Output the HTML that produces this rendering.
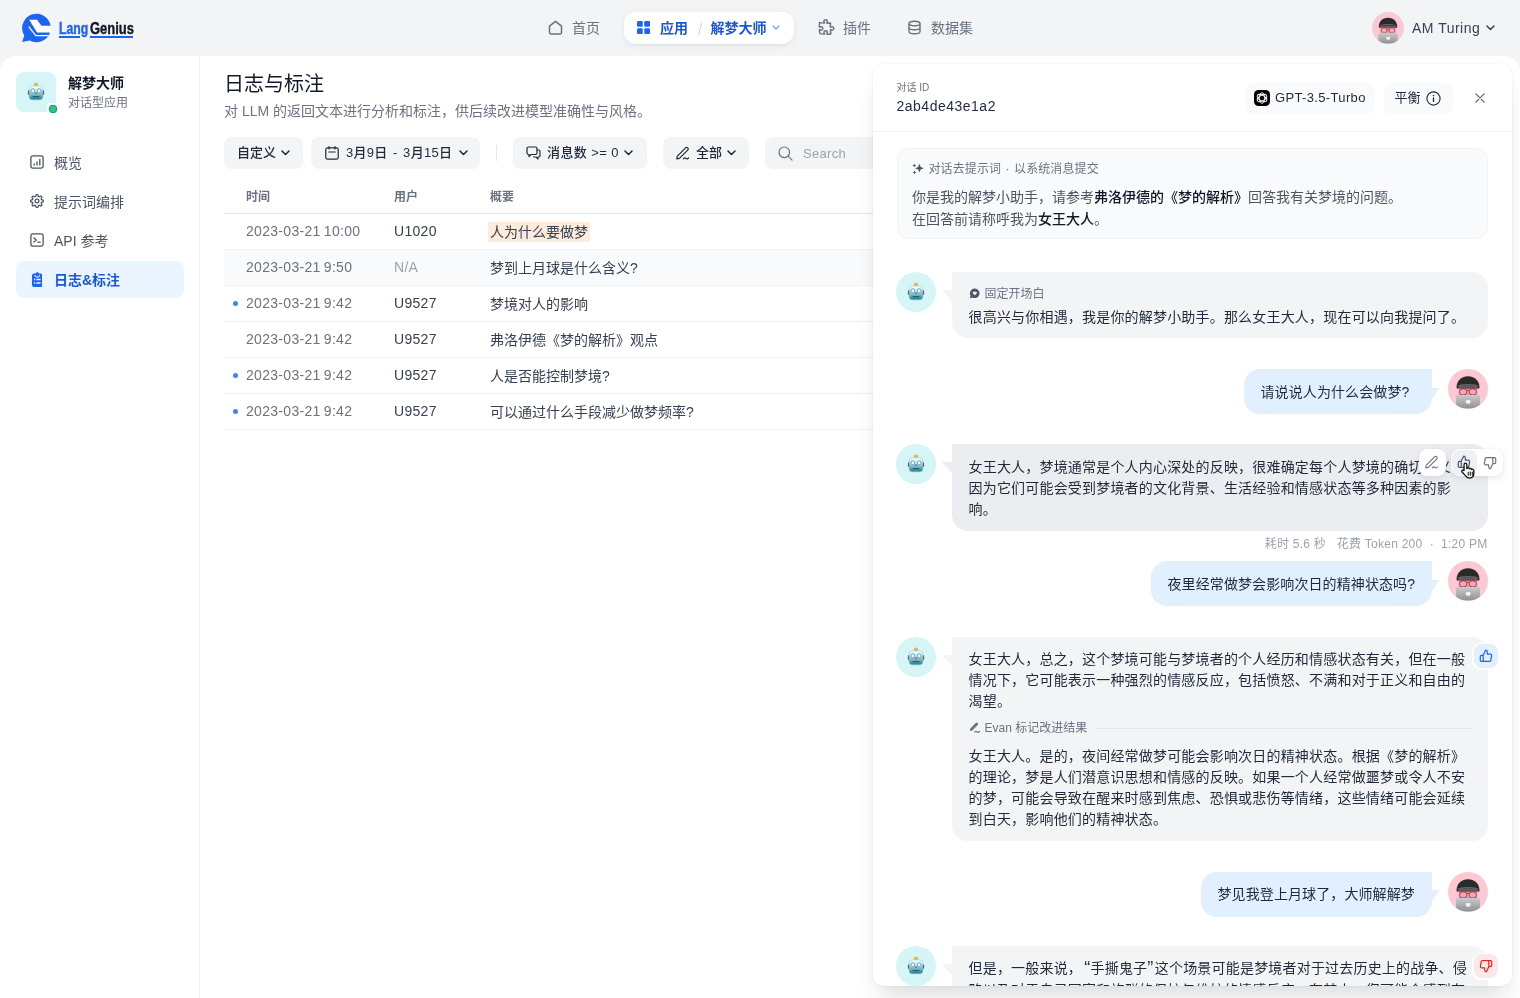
<!DOCTYPE html>
<html lang="zh-CN">
<head>
<meta charset="utf-8">
<title>LangGenius - 日志与标注</title>
<style>
*{box-sizing:border-box;margin:0;padding:0}
html,body{width:1520px;height:998px;overflow:hidden}
body{background:#F3F4F6;font-family:"Liberation Sans","Noto Sans CJK SC",sans-serif;color:#1F2937;position:relative;-webkit-font-smoothing:antialiased}
.abs{position:absolute}
svg{display:block}
/* header */
#hdr{will-change:transform;position:absolute;left:0;top:0;width:1520px;height:56px}
#logo{position:absolute;left:21px;top:13px}
#logotxt{position:absolute;left:58.500px;top:18.500px;font-size:16px;font-weight:700;line-height:20px}
#logotxt span{-webkit-text-stroke:0.4px currentColor;position:absolute;top:0;transform-origin:0 0;display:block}
.nav{position:absolute;top:12px;height:32px;line-height:20px;display:flex;align-items:center;font-size:14px;color:#6B7280;white-space:nowrap}
.nav svg{margin-right:8px;position:relative;top:-0.700px}
.nav span{position:relative;top:-0.300px}
#pill{background:#fff;border-radius:12px;box-shadow:0 2px 6px rgba(16,24,40,.06),0 1px 2px rgba(16,24,40,.04);color:#1A56DB;font-weight:700}
/* main */
#main{will-change:transform;position:absolute;left:0;top:56px;width:1520px;height:942px;background:#fff;border-radius:16px 16px 0 0;overflow:hidden}
#side{position:absolute;left:0;top:0;width:200px;height:942px;border-right:1px solid #F0F1F3}
.sitem{position:absolute;left:16px;width:168px;height:36px;line-height:20px;border-radius:8px;font-size:14px;color:#4B5563;display:flex;align-items:center;padding-left:14px;white-space:nowrap}
.sitem svg{margin-right:10px}
.sitem span{position:relative;top:0.500px}
.sitem.on{background:#EBF5FF;color:#1A56DB;font-weight:700}
/* filters */
.fbtn{position:absolute;top:81px;height:32px;line-height:18px;font-weight:500;background:#F3F4F6;border-radius:8px;font-size:13px;color:#1F2937;display:flex;align-items:center;white-space:nowrap}
/* table */
.th{position:absolute;top:133px;font-size:12px;font-weight:700;color:#6B7280;line-height:16px}
.row{position:absolute;left:224px;width:660px;height:36px;border-bottom:1px solid #F0F1F3;font-size:14px;color:#374151;line-height:35px;white-space:nowrap}
.row span{position:absolute;top:0}
.c1{left:22px;color:#6B7280;letter-spacing:.3px;word-spacing:-1px}.c2{left:170px;letter-spacing:.3px}.c3{left:266px;top:1px !important}
.hl{font-style:normal;background:#FDEBDC;position:relative;top:0;padding:2px 2px;margin-left:-2px;border-radius:2px}
.dot{position:absolute;left:9px;top:15px;width:5px;height:5px;border-radius:50%;background:#3F83F8}
/* drawer */
#drw{will-change:transform;position:absolute;left:873px;top:64px;width:638.5px;height:922px;background:#fff;border-radius:10px;box-shadow:0 20px 26px -8px rgba(16,24,40,.125),0 3px 14px rgba(16,24,40,.04),0 0 0 .5px rgba(16,24,40,.05);overflow:hidden}
#drwh{position:absolute;left:0;top:0;width:100%;height:68px;border-bottom:1px solid #F0F1F3}
.bub{position:absolute;background:#F3F4F6;border-radius:16px;font-size:14px;line-height:21px;color:#1F2937}
.ubub{position:absolute;background:#E1EFFE;border-radius:16px;border-top-right-radius:0;height:45px}
.hbtn{position:absolute;top:19px;height:30.500px;line-height:18px;background:#F9FAFB;border-radius:8px;font-size:13px;color:#1F2937;display:flex;align-items:center;white-space:nowrap}
.ct{position:absolute;font-size:14px;line-height:21px;color:#1F2937;white-space:nowrap;letter-spacing:.19px}
.tb{position:absolute;height:27px;border-radius:8px;background:#fff;box-shadow:0 2px 6px rgba(16,24,40,.10),0 0 1px rgba(16,24,40,.10)}
#pr b{font-weight:500;color:#111827}
.q{display:inline-block;text-align:center}
.av{position:absolute;width:40px;height:40px;border-radius:50%}
.bot{background:#D5F5F6}
.usr{background:#FBC8D4}
</style>
</head>
<body>
<svg width="0" height="0" style="position:absolute"><defs>
<linearGradient id="lap" x1="0" y1="0" x2="0" y2="1"><stop offset="0" stop-color="#C9CBCE"/><stop offset="1" stop-color="#8E9093"/></linearGradient>
<linearGradient id="rb" x1="0" y1="0" x2="0" y2="1"><stop offset="0" stop-color="#F6FDFE"/><stop offset=".3" stop-color="#CDECF1"/><stop offset=".62" stop-color="#7ABBC9"/><stop offset="1" stop-color="#26758A"/></linearGradient>
<linearGradient id="re" x1="0" y1="0" x2="0" y2="1"><stop offset="0" stop-color="#C9544F"/><stop offset=".6" stop-color="#4A3A3A"/><stop offset="1" stop-color="#2E2C2C"/></linearGradient>
<g id="face">
  <path d="M8.600 19.600c-0.700-7.200 4.300-12.400 11.400-12.400s12.100 5.200 11.400 12.400z" fill="#2A2A2C"/>
  <path d="M9.200 17.300c1-1.500 5.200-2.300 10.800-2.300s9.800 0.800 10.800 2.300c-3.500-0.900-18.100-0.900-21.600 0z" fill="#4A6881"/>
  <rect x="10.700" y="17.600" width="18.600" height="9.500" fill="#E3A08A"/>
  <rect x="10.700" y="17.600" width="18.600" height="2.200" fill="#7A4E3F"/>
  <rect x="11.600" y="19.900" width="7.100" height="6" rx="2.600" fill="#F3A3C5" stroke="#8A3345" stroke-width="0.800"/>
  <rect x="21.300" y="19.900" width="7.100" height="6" rx="2.600" fill="#F3A3C5" stroke="#8A3345" stroke-width="0.800"/>
  <path d="M18.700 21.400h2.600" stroke="#8A3345" stroke-width="0.800"/>
  <path d="M8 27.200q0-1.200 1.200-1.200h21.600q1.200 0 1.200 1.200v8.300q-4 4-12 4t-12-4z" fill="url(#lap)"/>
  <path d="M20.700 31.200c0.900-0.500 1.900 0.100 1.900 1.200s-0.700 2.300-1.500 2.300c-0.400 0-0.500-0.200-0.900-0.200s-0.500 0.200-0.900 0.200c-0.800 0-1.500-1.200-1.500-2.300s1-1.700 1.900-1.200c0.300 0.100 0.700 0.100 1 0z" fill="#F4F4F4"/>
</g>
<g id="robot">
  <rect x="19.200" y="12" width="1.600" height="2.600" fill="#B98A2B"/>
  <ellipse cx="20" cy="12.200" rx="2.100" ry="1.800" fill="#F0B340"/>
  <rect x="11.900" y="17.900" width="2.200" height="4.800" rx="1" fill="url(#re)"/>
  <rect x="25.900" y="17.900" width="2.200" height="4.800" rx="1" fill="url(#re)"/>
  <rect x="13.100" y="13.900" width="13.800" height="13.900" rx="3.200" fill="url(#rb)" stroke="#86C9D6" stroke-width="0.500"/>
  <rect x="15.100" y="16.900" width="3.300" height="3.800" rx="1.200" fill="#F4FDFE" stroke="#3FA3B9" stroke-width="0.900"/>
  <rect x="21.600" y="16.900" width="3.300" height="3.800" rx="1.200" fill="#F4FDFE" stroke="#3FA3B9" stroke-width="0.900"/>
  <ellipse cx="20" cy="21.300" rx="1.300" ry="0.950" fill="#D7576A"/>
  <rect x="16.600" y="23.900" width="6.800" height="1.300" rx="0.400" fill="#1F6073"/>
</g>
<g id="tup"><path d="M4.200 6.300L6.600 1.200c0.900 0 1.700 0.700 1.700 1.700v2.200h3c0.800 0 1.400 0.700 1.300 1.500l-0.800 4.700c-0.100 0.700-0.700 1.100-1.300 1.100H4.200z M4.200 6.300H2.400c-0.600 0-1.100 0.500-1.100 1.100v3.900c0 0.600 0.500 1.100 1.100 1.100h1.800" fill="none" stroke-width="1.200" stroke-linejoin="round" stroke-linecap="round"/></g>
</defs></svg>
<div id="hdr">
  <svg id="logo" width="32" height="32" viewBox="0 0 32 32">
    <path d="M15.500 0.700a14.300 14.300 0 1 1-6.800 26.900l-7.600 1.400 2.200-6.600A14.300 14.300 0 0 1 15.500 0.700z" fill="#1C64F2"/>
    <path d="M8.200 6.700h7.900l4.300 6h9.700v6.800H16.100z" fill="#fff"/>
    <path d="M7.700 13.600l7.100 9.100h12.600" fill="none" stroke="#fff" stroke-width="1.200"/>
  </svg>
  <div id="logotxt"><span style="color:#1C64F2;left:0;transform:scaleX(.765)">Lang</span><span style="color:#111827;left:31.500px;transform:scaleX(.81)">Genius</span></div>
  <div class="abs" style="left:59px;top:36px;width:21px;height:2px;background:#1C64F2"></div>
  <div class="abs" style="left:90px;top:36px;width:43px;height:2px;background:#1C64F2"></div>

  <div class="nav" style="left:548px">
    <svg width="15" height="15" viewBox="0 0 15 15" fill="none" stroke="#6B7280" stroke-width="1.5" stroke-linejoin="round"><path d="M1.5 6.2L7.5 1.3l6 4.900v6.300a1.500 1.500 0 0 1-1.500 1.500h-9a1.500 1.500 0 0 1-1.500-1.500z"/></svg>
    <span style="margin-left:1px">首页</span>
  </div>
  <div class="nav" id="pill" style="left:624px;width:170px;padding-left:13px">
    <svg width="13" height="13" viewBox="0 0 13 13" fill="#1C64F2"><rect x="0" y="0" width="5.750" height="5.750" rx="1.200"/><rect x="7.250" y="0" width="5.750" height="5.750" rx="1.200"/><rect x="0" y="7.250" width="5.750" height="5.750" rx="1.200"/><rect x="7.250" y="7.250" width="5.750" height="5.750" rx="1.200"/></svg>
    <span style="margin-left:2px">应用</span>
    <span style="color:#D1D5DB;font-weight:400;margin:0 8.500px 0 9.500px;font-size:16px;top:1.500px;transform:scaleX(.85)">/</span>
    <span>解梦大师</span>
    <svg style="margin:0 0 0 6px" width="8" height="5" viewBox="0 0 8 5" fill="none" stroke="#76A1F5" stroke-width="1.200" stroke-linecap="round" stroke-linejoin="round"><path d="M1 1l3 3 3-3"/></svg>
  </div>
  <div class="nav" style="left:818px">
    <svg style="margin-left:-1px;margin-right:6.500px;position:relative;top:-0.500px;transform:scaleX(-1)" width="18.500" height="18.500" viewBox="0 0 24 24" fill="none" stroke="#6B7280" stroke-width="1.900" stroke-linejoin="round" stroke-linecap="round"><path d="M14.250 6.087c0-.355.186-.676.401-.959.221-.29.349-.634.349-1.003 0-1.036-1.007-1.875-2.250-1.875s-2.250.84-2.250 1.875c0 .369.128.713.349 1.003.215.283.401.604.401.959a.64.64 0 0 1-.657.643 48.390 48.390 0 0 1-4.163-.3c.186 1.613.293 3.250.315 4.907a.656.656 0 0 1-.658.663c-.355 0-.676-.186-.959-.401a1.647 1.647 0 0 0-1.003-.349c-1.036 0-1.875 1.007-1.875 2.250s.84 2.250 1.875 2.250c.369 0 .713-.128 1.003-.349.283-.215.604-.401.959-.401.310 0 .555.260.532.570a48.039 48.039 0 0 1-.642 5.056c1.518.190 3.058.309 4.616.354a.64.64 0 0 0 .657-.643c0-.355-.186-.676-.401-.959a1.647 1.647 0 0 1-.349-1.003c0-1.035 1.008-1.875 2.250-1.875 1.243 0 2.250.84 2.250 1.875 0 .369-.128.713-.349 1.003-.215.283-.4.604-.4.959 0 .333.277.599.610.580a48.100 48.100 0 0 0 5.427-.630 48.050 48.050 0 0 0 .582-4.717.532.532 0 0 0-.533-.570c-.355 0-.676.186-.959.401-.290.221-.634.349-1.003.349-1.035 0-1.875-1.007-1.875-2.250s.84-2.250 1.875-2.250c.370 0 .713.128 1.003.349.283.215.604.401.960.401a.656.656 0 0 0 .658-.663 48.422 48.422 0 0 0-.370-5.360c-1.886.342-3.810.574-5.766.689a.578.578 0 0 1-.610-.580z"/></svg>
    <span style="margin-left:1px">插件</span>
  </div>
  <div class="nav" style="left:907px">
    <svg width="15" height="15" viewBox="0 0 15 15" fill="none" stroke="#6B7280" stroke-width="1.400"><ellipse cx="7.500" cy="3.500" rx="5.500" ry="2.300"/><path d="M2 3.500v8c0 1.300 2.500 2.300 5.500 2.300s5.500-1 5.500-2.300v-8"/><path d="M2 7.500c0 1.300 2.500 2.300 5.500 2.300s5.500-1 5.500-2.300"/></svg>
    <span style="margin-left:1px">数据集</span>
  </div>

  <div class="abs" id="uav" style="left:1372px;top:12px;width:32px;height:32px;border-radius:50%;background:#FBC8D4;overflow:hidden">
    <svg width="32" height="32" viewBox="0 0 40 40"><use href="#face"/></svg>
  </div>
  <div class="abs" style="left:1412px;top:19px;font-size:14px;line-height:18px;color:#374151;white-space:nowrap;letter-spacing:0.5px">AM Turing</div>
  <svg class="abs" style="left:1486px;top:25px" width="9" height="6" viewBox="0 0 9 6" fill="none" stroke="#374151" stroke-width="1.500" stroke-linecap="round" stroke-linejoin="round"><path d="M1 1l3.500 3.500L8 1"/></svg>
</div>
<div id="main">
  <div id="side">
    <div class="abs" style="left:16px;top:16px;width:40px;height:40px;border-radius:8px;background:#D5F5F6"></div>
    <svg class="abs" style="left:16px;top:16px" width="40" height="40" viewBox="0 0 40 40"><use href="#robot"/></svg>
    <div class="abs" style="left:47px;top:47px;width:12px;height:12px;border-radius:4px;background:#fff"></div>
    <div class="abs" style="left:49px;top:49px;width:8px;height:8px;border-radius:3px;background:#31C48D;border:1px solid #0E9F6E"></div>
    <div class="abs" style="left:68px;top:17px;font-size:14px;line-height:20px;font-weight:700;color:#111827;white-space:nowrap">解梦大师</div>
    <div class="abs" style="left:68px;top:38px;font-size:12px;line-height:18px;color:#6B7280;white-space:nowrap">对话型应用</div>

    <div class="sitem" style="top:88px">
      <svg width="14" height="14" viewBox="0 0 14 14" fill="none" stroke="#4B5563" stroke-width="1.300" stroke-linecap="round"><rect x="0.900" y="0.900" width="12.200" height="12.200" rx="1.800"/><path d="M4.200 10v-1M7 10V7M9.800 10V4.500"/></svg>
      <span>概览</span></div>
    <div class="sitem" style="top:127px">
      <svg width="14" height="14" viewBox="0 0 24 24" fill="none" stroke="#4B5563" stroke-width="2.200" stroke-linecap="round" stroke-linejoin="round"><circle cx="12" cy="12" r="3.200"/><path d="M19.400 15a1.650 1.650 0 0 0 .33 1.820l.06.06a2 2 0 1 1-2.830 2.830l-.06-.06a1.650 1.650 0 0 0-1.820-.33 1.650 1.650 0 0 0-1 1.510V21a2 2 0 1 1-4 0v-.09A1.650 1.650 0 0 0 9 19.400a1.650 1.650 0 0 0-1.820.33l-.06.06a2 2 0 1 1-2.830-2.830l.06-.06a1.650 1.650 0 0 0 .33-1.820 1.650 1.650 0 0 0-1.510-1H3a2 2 0 1 1 0-4h.09A1.650 1.650 0 0 0 4.600 9a1.650 1.650 0 0 0-.33-1.820l-.06-.06a2 2 0 1 1 2.830-2.830l.06.06a1.650 1.650 0 0 0 1.820.33H9a1.650 1.650 0 0 0 1-1.510V3a2 2 0 1 1 4 0v.09a1.650 1.650 0 0 0 1 1.510 1.650 1.650 0 0 0 1.820-.33l.06-.06a2 2 0 1 1 2.830 2.830l-.06.06a1.650 1.650 0 0 0-.33 1.820V9a1.650 1.650 0 0 0 1.510 1H21a2 2 0 1 1 0 4h-.09a1.650 1.650 0 0 0-1.510 1z"/></svg>
      <span>提示词编排</span></div>
    <div class="sitem" style="top:166px">
      <svg width="14" height="14" viewBox="0 0 14 14" fill="none" stroke="#4B5563" stroke-width="1.300" stroke-linecap="round" stroke-linejoin="round"><rect x="0.900" y="0.900" width="12.200" height="12.200" rx="1.800"/><path d="M4 5l2.200 2L4 9M7.800 9.200h2.400"/></svg>
      <span>API 参考</span></div>
    <div class="sitem on" style="top:204.500px;height:37px">
      <svg style="margin-left:1.700px;margin-right:11.800px" width="10.500" height="15" viewBox="0 0 10.500 15"><path d="M2 1.600h1.600a1.700 1.700 0 0 1 3.300 0h1.600a2 2 0 0 1 2 2v9.400a2 2 0 0 1-2 2H2a2 2 0 0 1-2-2V3.600a2 2 0 0 1 2-2z" fill="#1C64F2"/><path d="M2.800 3.200a2.500 2.500 0 0 0 4.900 0" fill="none" stroke="#EBF5FF" stroke-width="1.100"/><path d="M1.900 7.600h1.300M4.300 7.600h4.300M1.900 10.900h1.300M4.300 10.900h4.300" stroke="#EBF5FF" stroke-width="1.500" fill="none"/></svg>
      <span>日志&amp;标注</span></div>
  </div>
  <div class="abs" style="left:224px;top:14px;font-size:20px;line-height:28px;font-weight:400;color:#111827;white-space:nowrap">日志与标注</div>
  <div class="abs" style="left:224px;top:45px;font-size:14px;line-height:20px;color:#6B7280;white-space:nowrap">对 LLM 的返回文本进行分析和标注，供后续改进模型准确性与风格。</div>

  <div class="fbtn" style="left:224px;width:79px;padding-left:13px"><span>自定义</span><svg style="margin-left:5px" width="9" height="6" viewBox="0 0 9 6" fill="none" stroke="#1F2937" stroke-width="1.500" stroke-linecap="round" stroke-linejoin="round"><path d="M1 1l3.500 3.500L8 1"/></svg></div>
  <div class="fbtn" style="left:311px;width:169px;padding-left:14px">
    <svg width="14" height="14" viewBox="0 0 14 14" fill="none" stroke="#1F2937" stroke-width="1.200" stroke-linecap="round"><rect x="0.800" y="1.800" width="12.400" height="11.400" rx="1.800"/><path d="M4 0.600v2.400M10 0.600v2.400M3.800 6h6.400"/></svg>
    <span style="margin-left:7px;letter-spacing:.3px;word-spacing:1.500px">3月9日 - 3月15日</span><svg style="margin-left:7px" width="9" height="6" viewBox="0 0 9 6" fill="none" stroke="#1F2937" stroke-width="1.500" stroke-linecap="round" stroke-linejoin="round"><path d="M1 1l3.500 3.500L8 1"/></svg></div>
  <div class="abs" style="left:496px;top:89px;width:1px;height:16px;background:#E5E7EB"></div>
  <div class="fbtn" style="left:513px;width:134px;padding-left:13px">
    <svg width="15" height="14" viewBox="0 0 15 14" fill="none" stroke="#1F2937" stroke-width="1.200" stroke-linejoin="round" stroke-linecap="round"><path d="M2.500 1h7a1.500 1.500 0 0 1 1.500 1.500v4.500a1.500 1.500 0 0 1-1.500 1.500H5l-2 2v-2h-0.500a1.500 1.500 0 0 1-1.500-1.500V2.500A1.500 1.500 0 0 1 2.500 1z"/><path d="M11 4h1.500a1.500 1.500 0 0 1 1.500 1.500v4a1.500 1.500 0 0 1-1.500 1.500H12v2l-2-2H7.500"/></svg>
    <span style="margin-left:6px;letter-spacing:.4px">消息数 &gt;= 0</span><svg style="margin-left:5px" width="9" height="6" viewBox="0 0 9 6" fill="none" stroke="#1F2937" stroke-width="1.500" stroke-linecap="round" stroke-linejoin="round"><path d="M1 1l3.500 3.500L8 1"/></svg></div>
  <div class="fbtn" style="left:663px;width:86px;padding-left:13px">
    <svg width="14" height="14" viewBox="0 0 14 14" fill="none" stroke="#1F2937" stroke-width="1.200" stroke-linejoin="round" stroke-linecap="round"><path d="M1.200 10.300l-0.400 2.600 2.600-0.500 8.300-8.300a1.500 1.500 0 0 0-2.200-2.200z"/><path d="M7.500 12.800c1-1.200 1.700-1.200 2.400-0.400s1.500 0.800 2.600-0.400"/></svg>
    <span style="margin-left:6px">全部</span><svg style="margin-left:5px" width="9" height="6" viewBox="0 0 9 6" fill="none" stroke="#1F2937" stroke-width="1.500" stroke-linecap="round" stroke-linejoin="round"><path d="M1 1l3.500 3.500L8 1"/></svg></div>
  <div class="fbtn" style="left:765px;width:200px;padding-left:13px;color:#9CA3AF">
    <svg width="15" height="15" viewBox="0 0 15 15" fill="none" stroke="#6B7280" stroke-width="1.200" stroke-linecap="round"><circle cx="6.300" cy="6.300" r="5.300"/><path d="M10.300 10.300l3.800 3.800"/></svg>
    <span style="margin-left:10px;letter-spacing:.3px;position:relative;top:1px">Search</span></div>

  <div class="th" style="left:246px">时间</div>
  <div class="th" style="left:394px">用户</div>
  <div class="th" style="left:490px">概要</div>
  <div class="abs" style="left:224px;top:157px;width:660px;height:1px;background:#E5E7EB"></div>
  <div class="row" style="top:158px"><span class="c1">2023-03-21 10:00</span><span class="c2">U1020</span><span class="c3"><i class="hl">人为什么要做梦</i></span></div>
  <div class="row" style="top:194px;background:#F9FAFB"><span class="c1">2023-03-21 9:50</span><span class="c2" style="color:#9CA3AF">N/A</span><span class="c3">梦到上月球是什么含义?</span></div>
  <div class="row" style="top:230px"><b class="dot"></b><span class="c1">2023-03-21 9:42</span><span class="c2">U9527</span><span class="c3">梦境对人的影响</span></div>
  <div class="row" style="top:266px"><span class="c1">2023-03-21 9:42</span><span class="c2">U9527</span><span class="c3">弗洛伊德《梦的解析》观点</span></div>
  <div class="row" style="top:302px"><b class="dot"></b><span class="c1">2023-03-21 9:42</span><span class="c2">U9527</span><span class="c3">人是否能控制梦境?</span></div>
  <div class="row" style="top:338px"><b class="dot"></b><span class="c1">2023-03-21 9:42</span><span class="c2">U9527</span><span class="c3">可以通过什么手段减少做梦频率?</span></div>
</div>
<div id="drw"><div id="drwh">
  <div class="abs" style="left:23.500px;top:16px;font-size:10px;line-height:16px;color:#6B7280;white-space:nowrap">对话 ID</div>
  <div class="abs" style="left:23.500px;top:33px;font-size:14px;line-height:18px;color:#1F2937;letter-spacing:.5px;white-space:nowrap">2ab4de43e1a2</div>
  <div class="hbtn" style="left:372px;width:129.500px;padding-left:9px">
    <svg width="16" height="16" viewBox="0 0 16 16"><rect width="16" height="16" rx="4.500" fill="#000"/><g fill="none" stroke="#fff" stroke-width="0.900"><ellipse cx="8" cy="8" rx="2.700" ry="5.300"/><ellipse cx="8" cy="8" rx="2.700" ry="5.300" transform="rotate(60 8 8)"/><ellipse cx="8" cy="8" rx="2.700" ry="5.300" transform="rotate(120 8 8)"/></g></svg>
    <span style="margin-left:5px;letter-spacing:.35px">GPT-3.5-Turbo</span></div>
  <div class="hbtn" style="left:511px;width:68.500px;padding-left:10.500px"><span>平衡</span>
    <svg style="margin-left:5px" width="15" height="15" viewBox="0 0 15 15" fill="none" stroke="#1F2937" stroke-width="1.100"><circle cx="7.500" cy="7.500" r="6.600"/><path d="M7.500 6.800v3.600" stroke-width="1.300" stroke-linecap="round"/><circle cx="7.500" cy="4.600" r="0.800" fill="#1F2937" stroke="none"/></svg></div>
  <svg class="abs" style="left:602px;top:29px" width="10" height="10" viewBox="0 0 10 10" stroke="#5B6472" stroke-width="1.200" stroke-linecap="round"><path d="M0.800 0.800l8.400 8.400M9.200 0.800L0.800 9.200"/></svg>
</div>

<div class="abs" style="left:24px;top:84px;width:590.500px;height:91px;border-radius:12px;background:#F9FAFB;box-shadow:inset 0 0 0 1px #F3F4F6"></div>
<svg class="abs" style="left:39px;top:99px" width="12" height="12" viewBox="0 0 12 12" fill="#4B5563"><path d="M7.400 0.800l1.300 3.100 3.100 1.300-3.100 1.300-1.300 3.100-1.300-3.100-3.100-1.300 3.100-1.300z"/><path d="M2.300 0.600l0.600 1.400 1.400 0.600-1.400 0.600-0.600 1.400-0.600-1.400-1.400-0.600 1.400-0.600z"/><path d="M2.500 7.400l0.600 1.400 1.400 0.600-1.400 0.600-0.600 1.400-0.600-1.400-1.400-0.600 1.400-0.600z"/></svg>
<div class="abs" style="left:55.500px;top:96px;font-size:12px;line-height:18px;color:#6B7280;white-space:nowrap;letter-spacing:.1px;word-spacing:1px">对话去提示词 · 以系统消息提交</div>
<div class="abs" style="left:39px;top:122px;font-size:14px;line-height:22px;color:#4B5563;white-space:nowrap" id="pr">你是我的解梦小助手，请参考<b>弗洛伊德的《梦的解析》</b>回答我有关梦境的问题。<br>在回答前请称呼我为<b>女王大人</b>。</div>

<div class="av bot" style="left:23px;top:208px"><svg width="40" height="40" viewBox="0 0 40 40"><use href="#robot"/></svg></div><svg class="abs" style="left:69px;top:226px" width="10" height="11" viewBox="0 0 10 11"><path d="M0 0h10v11z" fill="#F3F4F6"/></svg>
<div class="bub" style="left:79px;top:208px;width:535.500px;height:66px;border-top-left-radius:0"></div>
<svg class="abs" style="left:95.500px;top:223.500px" width="11" height="11" viewBox="0 0 11 11"><path d="M5.800 0.600a4.700 4.700 0 1 1-2.300 8.800l-2.800 0.800 0.900-2.500A4.700 4.700 0 0 1 5.800 0.600z" fill="#4B5563"/><path d="M5.800 7.300l-1.900-1.900a1.150 1.150 0 0 1 1.600-1.600l0.300 0.300 0.300-0.300a1.150 1.150 0 0 1 1.600 1.600z" fill="#F3F4F6"/></svg>
<div class="abs" style="left:111.500px;top:221px;font-size:12px;line-height:18px;color:#6B7280;white-space:nowrap">固定开场白</div>
<div class="ct" style="left:95.500px;top:243px">很高兴与你相遇，我是你的解梦小助手。那么女王大人，现在可以向我提问了。</div>

<div class="ubub" style="left:371px;top:305px;width:188px"></div><svg class="abs" style="left:559px;top:323.5px" width="8" height="11" viewBox="0 0 8 11"><path d="M0 0h7.500L0 11z" fill="#E1EFFE"/></svg>
<div class="ct" style="left:387.500px;top:318px;letter-spacing:.1px">请说说人为什么会做梦?</div>
<div class="av usr" style="left:575px;top:305px;overflow:hidden"><svg width="40" height="40" viewBox="0 0 40 40"><use href="#face"/></svg></div>

<div class="av bot" style="left:23px;top:380px"><svg width="40" height="40" viewBox="0 0 40 40"><use href="#robot"/></svg></div><svg class="abs" style="left:69px;top:398px" width="10" height="11" viewBox="0 0 10 11"><path d="M0 0h10v11z" fill="#ECEDF1"/></svg>
<div class="bub" style="left:79px;top:380px;width:535.500px;height:86.500px;border-top-left-radius:0;background:#ECEDF1"></div>
<div class="ct" style="left:95.500px;top:393px">女王大人，梦境通常是个人内心深处的反映，很难确定每个人梦境的确切含义，<br>因为它们可能会受到梦境者的文化背景、生活经验和情感状态等多种因素的影<br>响。</div>
<div class="abs" style="right:24px;top:471px;font-size:12px;line-height:18px;color:#9CA3AF;white-space:nowrap;letter-spacing:.25px">耗时 5.6 秒&nbsp;&nbsp; 花费 Token 200&nbsp; ·&nbsp; 1:20 PM</div>

<div class="ubub" style="left:278px;top:497px;width:281px"></div><svg class="abs" style="left:559px;top:515.5px" width="8" height="11" viewBox="0 0 8 11"><path d="M0 0h7.500L0 11z" fill="#E1EFFE"/></svg>
<div class="ct" style="left:294.500px;top:510px;letter-spacing:.1px">夜里经常做梦会影响次日的精神状态吗?</div>
<div class="av usr" style="left:575px;top:497px;overflow:hidden"><svg width="40" height="40" viewBox="0 0 40 40"><use href="#face"/></svg></div>

<div class="av bot" style="left:23px;top:572.5px"><svg width="40" height="40" viewBox="0 0 40 40"><use href="#robot"/></svg></div><svg class="abs" style="left:69px;top:590.5px" width="10" height="11" viewBox="0 0 10 11"><path d="M0 0h10v11z" fill="#F3F4F6"/></svg>
<div class="bub" style="left:79px;top:572.500px;width:535.500px;height:204.500px;border-top-left-radius:0"></div>
<div class="ct" style="left:95.500px;top:584.500px">女王大人，总之，这个梦境可能与梦境者的个人经历和情感状态有关，但在一般<br>情况下，它可能表示一种强烈的情感反应，包括愤怒、不满和对于正义和自由的<br>渴望。</div>
<svg class="abs" style="left:95.500px;top:658px" width="12" height="12" viewBox="0 0 11 11" fill="#6B7280"><path d="M0.700 8.200l0.500-2.300 5-5a1.250 1.250 0 0 1 1.800 1.800l-5 5z"/><path d="M5.300 9.200c0.700-0.900 1.400-0.900 2 -0.200s1.300 0.600 2.200-0.300" fill="none" stroke="#6B7280" stroke-width="1.100" stroke-linecap="round"/></svg>
<div class="abs" style="left:111.500px;top:655px;font-size:12px;line-height:18px;color:#6B7280;white-space:nowrap;letter-spacing:0">Evan 标记改进结果</div>
<div class="abs" style="left:221.500px;top:663.500px;width:377px;height:1px;background:#E5E7EB"></div>
<div class="ct" style="left:95.500px;top:681.500px">女王大人。是的，夜间经常做梦可能会影响次日的精神状态。根据《梦的解析》<br>的理论，梦是人们潜意识思想和情感的反映。如果一个人经常做噩梦或令人不安<br>的梦，可能会导致在醒来时感到焦虑、恐惧或悲伤等情绪，这些情绪可能会延续<br>到白天，影响他们的精神状态。</div>

<div class="ubub" style="left:328px;top:807.500px;width:231px"></div><svg class="abs" style="left:559px;top:826.0px" width="8" height="11" viewBox="0 0 8 11"><path d="M0 0h7.500L0 11z" fill="#E1EFFE"/></svg>
<div class="ct" style="left:344.500px;top:819.500px;letter-spacing:.1px">梦见我登上月球了，大师解解梦</div>
<div class="av usr" style="left:575px;top:807.5px;overflow:hidden"><svg width="40" height="40" viewBox="0 0 40 40"><use href="#face"/></svg></div>

<div class="av bot" style="left:23px;top:881.5px"><svg width="40" height="40" viewBox="0 0 40 40"><use href="#robot"/></svg></div><svg class="abs" style="left:69px;top:899.5px" width="10" height="11" viewBox="0 0 10 11"><path d="M0 0h10v11z" fill="#F3F4F6"/></svg>
<div class="bub" style="left:79px;top:881.500px;width:535.500px;height:120px;border-top-left-radius:0"></div>
<div class="ct" style="left:95.500px;top:893.500px">但是，一般来说，<span class="q" style="width:8.500px;text-align:right;font-size:18px;line-height:0;position:relative;top:1.500px">“</span>手撕鬼子<span class="q" style="width:7.500px;text-align:left;font-size:18px;line-height:0;position:relative;top:1.500px">”</span>这个场景可能是梦境者对于过去历史上的战争、侵<br><span style="position:relative;top:1.500px">略以及对于自己国家和族群的保护与维护的情感反应。在梦中，您可能会感到有</span></div>

<!-- feedback badges -->
<div class="abs" style="left:599px;top:578.500px;width:27px;height:27px;border-radius:9px;background:#fff"></div>
<div class="abs" style="left:600.500px;top:580px;width:24px;height:24px;border-radius:8px;background:#E1EFFE"></div>
<svg class="abs" style="left:605.500px;top:585px" width="14" height="14" viewBox="0 0 14 14" stroke="#1C64F2"><use href="#tup"/></svg>
<div class="abs" style="left:599px;top:888.500px;width:27px;height:27px;border-radius:9px;background:#fff"></div>
<div class="abs" style="left:600.500px;top:890px;width:24px;height:24px;border-radius:8px;background:#FDE8E8"></div>
<svg class="abs" style="left:605.500px;top:895px;transform:rotate(180deg)" width="14" height="14" viewBox="0 0 14 14" stroke="#E02424"><use href="#tup"/></svg>

<!-- hover toolbar -->
<div class="tb" style="left:545.500px;top:385px;width:27px"></div>
<svg class="abs" style="left:552px;top:391px" width="14" height="14" viewBox="0 0 14 14" fill="none" stroke="#6B7280" stroke-width="1.100" stroke-linejoin="round" stroke-linecap="round"><path d="M1.200 10.300l-0.400 2.600 2.600-0.500 8.300-8.300a1.500 1.500 0 0 0-2.200-2.200z"/><path d="M7.500 12.800c1-1.200 1.700-1.200 2.400-0.400s1.500 0.800 2.600-0.400"/></svg>
<div class="tb" style="left:577.500px;top:385px;width:52.500px"></div>
<div class="abs" style="left:578.500px;top:386px;width:25px;height:25px;border-radius:7px;background:#EEF1F6"></div>
<svg class="abs" style="left:584px;top:391px" width="14" height="14" viewBox="0 0 14 14" stroke="#4B5563"><use href="#tup"/></svg>
<svg class="abs" style="left:610px;top:392px;transform:rotate(180deg)" width="14" height="14" viewBox="0 0 14 14" stroke="#6B7280"><use href="#tup"/></svg>
<!-- cursor -->
<svg class="abs" style="left:588px;top:397.500px" width="14.500" height="17.700" viewBox="0 0 18 22"><path d="M5.500 1.500c1.100 0 1.700 0.800 1.700 1.800v5.200l0.300-0.600c0.300-0.700 1.200-1 1.900-0.700 0.600 0.200 0.900 0.700 1 1.200 0.400-0.500 1.100-0.700 1.800-0.400 0.600 0.200 0.900 0.700 1 1.300 0.400-0.300 1-0.400 1.500-0.200 0.800 0.300 1.200 1 1.200 1.800v3.500c0 3-1.800 5.600-5.200 5.600-2.600 0-4-1-5.200-3L1.300 12.400c-0.500-0.800-0.300-1.700 0.400-2.200 0.700-0.400 1.600-0.300 2.100 0.400V3.300c0-1 0.600-1.800 1.700-1.800z" fill="#fff" stroke="#111" stroke-width="1.600" stroke-linejoin="round"/><path d="M9 12.500v4M11.500 12.500v4M14 12.500v4" stroke="#111" stroke-width="1.300" stroke-linecap="round"/></svg>
</div>
</body>
</html>
